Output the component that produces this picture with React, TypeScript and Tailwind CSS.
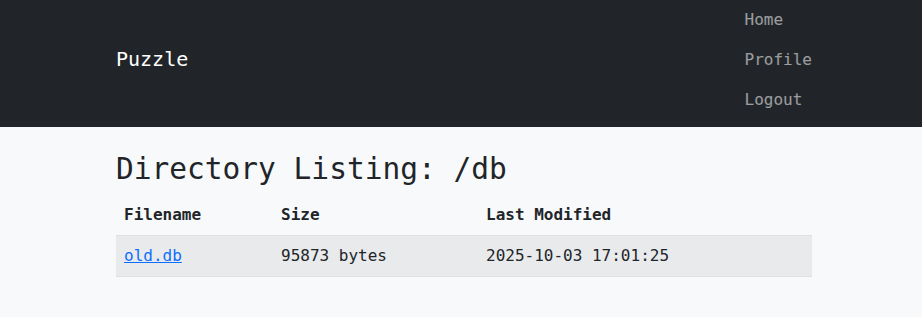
export default function App() {
  const rows = [
    { name: "old.db", size: "95873 bytes", modified: "2025-10-03 17:01:25" },
  ];

  return (
    <div
      className="min-h-[317px] bg-[#f8f9fa] text-[#212529]"
      style={{ fontFamily: '"DejaVu Sans Mono", "Liberation Mono", monospace' }}
    >
      <nav className="h-[127px] bg-[#212529]">
        <div className="mx-auto flex h-full w-[702px] items-center justify-between pl-[6px]">
          <a href="#" className="pb-[10px] text-[20px] leading-[30px] text-white">
            Puzzle
          </a>
          <ul className="flex flex-col self-start">
            <li>
              <a href="#" className="block py-2 text-base leading-6 text-white/55">
                Home
              </a>
            </li>
            <li>
              <a href="#" className="block py-2 text-base leading-6 text-white/55">
                Profile
              </a>
            </li>
            <li>
              <a href="#" className="block py-2 text-base leading-6 text-white/55">
                Logout
              </a>
            </li>
          </ul>
        </div>
      </nav>

      <main className="mx-auto w-[702px] pt-[25px] pl-[6px]">
        <h2 className="mb-2 text-[29.5px] leading-[1.2] font-medium">
          Directory Listing: /db
        </h2>
        <table className="w-full border-collapse text-base leading-6">
          <thead>
            <tr className="text-left">
              <th className="w-[157px] px-2 py-2 font-bold">Filename</th>
              <th className="w-[205px] px-2 py-2 font-bold">Size</th>
              <th className="px-2 py-2 font-bold">Last Modified</th>
            </tr>
          </thead>
          <tbody>
            {rows.map((r) => (
              <tr
                key={r.name}
                className="border-y border-[#dee2e6] bg-[#e9eaec]"
              >
                <td className="px-2 py-2">
                  <a href="#" className="text-[#0d6efd] underline">
                    {r.name}
                  </a>
                </td>
                <td className="px-2 py-2">{r.size}</td>
                <td className="px-2 py-2">{r.modified}</td>
              </tr>
            ))}
          </tbody>
        </table>
      </main>
    </div>
  );
}
